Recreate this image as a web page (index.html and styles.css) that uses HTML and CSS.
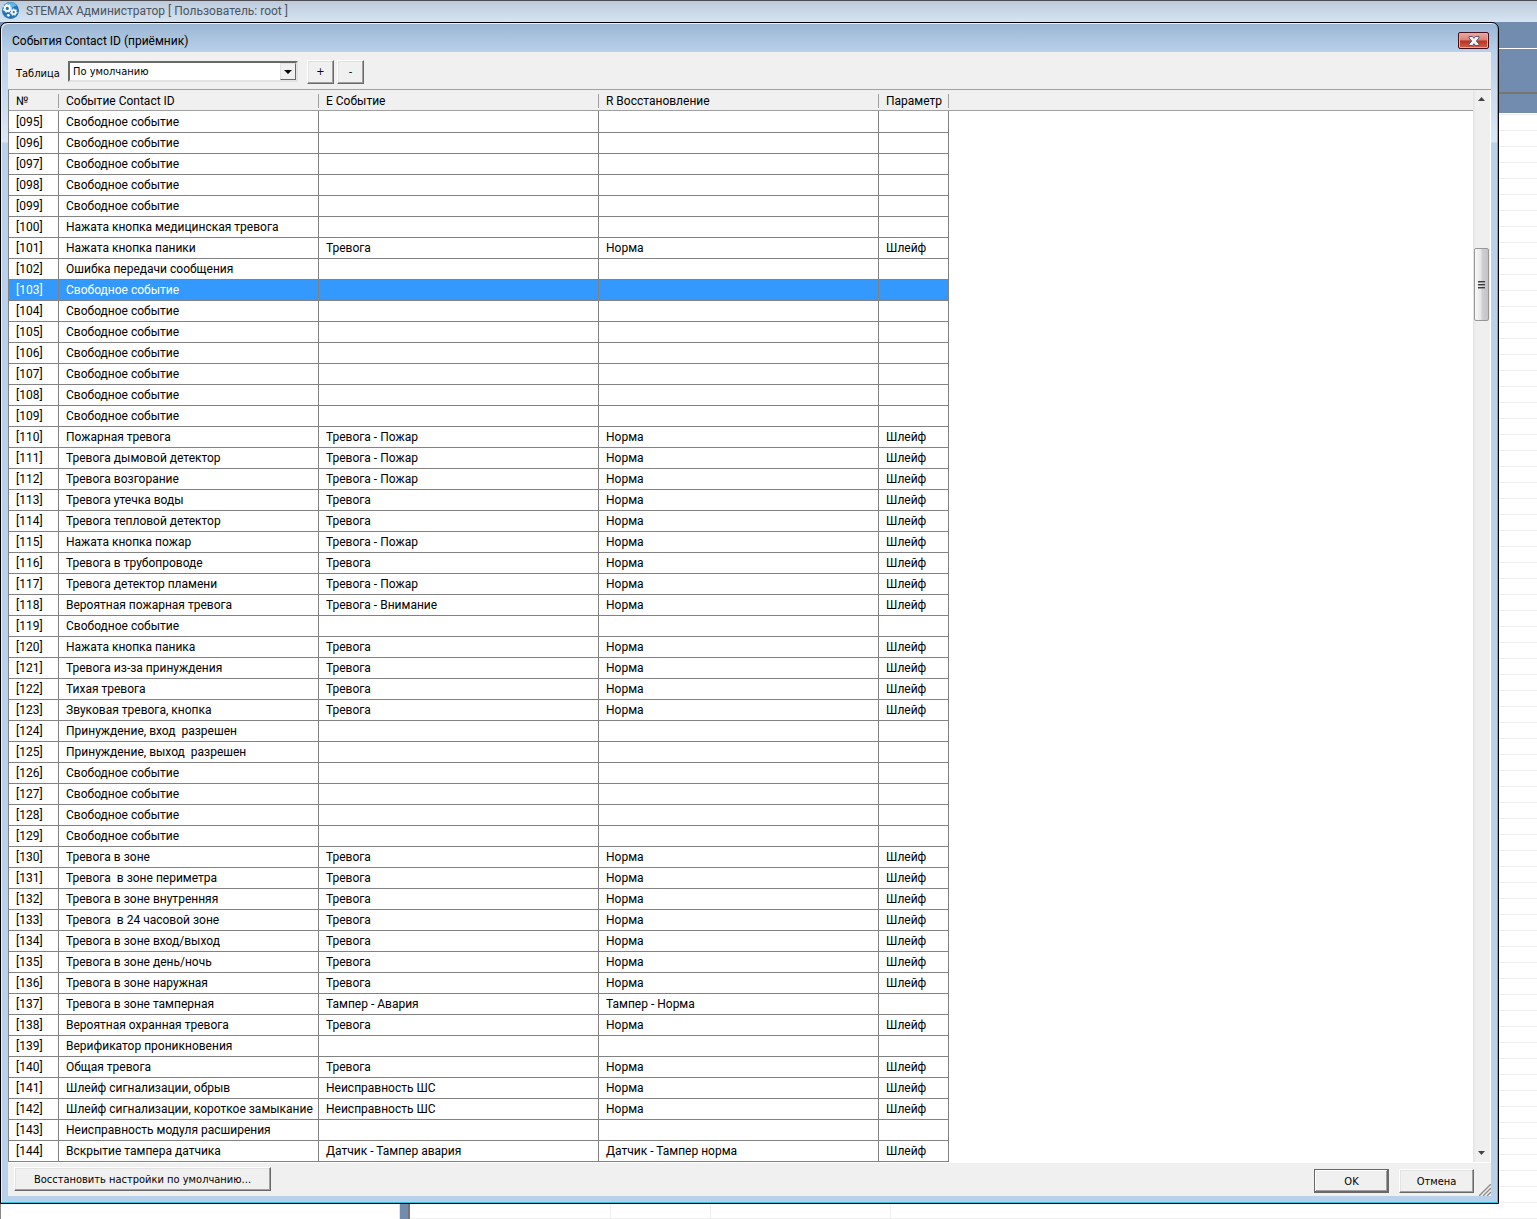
FILE: index.html
```
<!DOCTYPE html>
<html lang="ru">
<head>
  <meta charset="UTF-8">
  <title>STEMAX Администратор</title>
  <link rel="stylesheet" href="styles.css">
</head>
<body>

<div class="desktop">
  <div class="app">
    <header class="app-title">
      <svg class="app-icon" width="17" height="17" viewBox="0 0 16 16">
        <circle cx="8" cy="8" r="8" fill="#2474b8"/>
        <path d="M2 3a8 8 0 0 1 12 0L8 6z" fill="#64b4e2"/>
        <circle cx="5" cy="6" r="2.4" fill="#2474b8" stroke="#fff" stroke-width="1.8"/>
        <circle cx="5" cy="6" r="3.6" fill="none" stroke="#fff" stroke-width="1" stroke-dasharray="1.5 1.5"/>
        <circle cx="11" cy="9.500" r="1.900" fill="#2474b8" stroke="#fff" stroke-width="1.600"/>
        <circle cx="11" cy="9.500" r="3" fill="none" stroke="#fff" stroke-width="1" stroke-dasharray="1.3 1.3"/>
        <circle cx="6" cy="12.500" r="1.300" fill="#fff"/>
      </svg>
      <span>STEMAX Администратор [ Пользователь: root ]</span>
    </header>
    <div class="app-menu"></div>
    <div class="app-tools"></div>
    <div class="app-head"></div>
    <div class="app-panes">
      <div class="pane-tree"></div>
      <div class="splitter"></div>
      <div class="pane-list">
        <div class="list-col col-a"></div>
        <div class="list-col col-b"></div>
        <div class="list-col col-c"></div>
      </div>
    </div>
  </div>

  <div class="dialog">
    <div class="dialog-title">
      <span>События Contact ID (приёмник)</span>
      <button class="btn-close" aria-label="Закрыть">
        <svg width="12" height="10" viewBox="0 0 12 10">
          <path d="M1 .5h3.500L6 2.300 7.500.5H11v1.500L8.300 5 11 8v1.500H7.500L6 7.700 4.500 9.500H1V8l2.700-3L1 2z" fill="#f4f4f6" stroke="#535b74"/>
        </svg>
      </button>
    </div>

    <div class="dialog-body">
      <div class="toolbar">
        <label for="tableSelect">Таблица</label>
        <div class="combo">
          <select id="tableSelect">
            <option>По умолчанию</option>
          </select>
          <span class="combo-arrow"></span>
        </div>
        <button class="btn btn-small" aria-label="Добавить">+</button>
        <button class="btn btn-small" aria-label="Удалить">-</button>
      </div>

      <div class="list">
        <table class="events">
          <thead>
            <tr>
              <th class="c-num">№</th>
              <th class="c-name">Событие Contact ID</th>
              <th class="c-event">E Событие</th>
              <th class="c-event">R Восстановление</th>
              <th class="c-param">Параметр</th>
              <th class="c-rest"></th>
            </tr>
          </thead>
          <tbody id="eventRows"></tbody>
        </table>
        <div class="scrollbar">
          <button class="scroll-btn" aria-label="Вверх">
            <svg width="7" height="4" viewBox="0 0 7 4"><path d="M3.500 0L7 4H0z" fill="#444"/></svg>
          </button>
          <div class="track-before"></div>
          <div class="thumb"><i></i><i></i><i></i></div>
          <div class="track-after"></div>
          <button class="scroll-btn" aria-label="Вниз">
            <svg width="7" height="4" viewBox="0 0 7 4"><path d="M0 0h7L3.500 4z" fill="#444"/></svg>
          </button>
        </div>
      </div>

      <div class="footer">
        <button class="btn btn-restore">Восстановить настройки по умолчанию...</button>
        <div class="footer-right">
          <button class="btn btn-ok">OK</button>
          <button class="btn btn-cancel">Отмена</button>
        </div>
        <svg class="grip" width="12" height="12" viewBox="0 0 12 12">
          <path d="M0 12L12 0M4 12l8-8M8 12l4-4" stroke="#8c8c8c" stroke-width="1.400" fill="none"/>
        </svg>
      </div>
    </div>
  </div>
</div>

<script src="script.js"></script>
</body>
</html>
```

FILE: styles.css
```
* {
  box-sizing: border-box;
}
body {
  margin: 0;
  font-family: Roboto, "Open Sans", sans-serif;
  font-size: 12px;
  color: #000;
}
button, select {
  font-family: "DejaVu Sans Condensed", "DejaVu Sans", sans-serif;
  font-size: 11px;
  color: #000;
}

/* Main window, the dialog is stacked over it */
.desktop {
  display: grid;
  min-height: 100vh;
}
.app, .dialog {
  grid-area: 1 / 1;
  min-width: 0;
}
.app {
  display: flex;
  flex-direction: column;
  background: #fff;
}
.app-title {
  display: flex;
  align-items: center;
  gap: 7px;
  height: 22px;
  padding: 0 0 2px 2px;
  border-top: 1px solid #4c4c50;
  background: linear-gradient(#bccbdc, #d7e4f2);
  color: #4b5560;
  line-height: 18px;
}
.app-menu {
  height: 27px;
  background: #728cb0;
  border-bottom: 1px solid #fff;
}
.app-tools {
  height: 45px;
  background: #728cb0;
  border-bottom: 2px solid #77756d;
}
.app-head {
  height: 19px;
  background: #728cb0;
}
.app-panes {
  display: flex;
  flex: 1;
}
.pane-tree {
  width: 400px;
  border-left: 1px solid #888;
  border-right: 1px solid #e4e4e4;
}
.splitter {
  width: 10px;
  background: #728cb0;
  border-right: 2px solid #77756d;
}
.pane-list {
  display: flex;
  flex: 1;
  background: repeating-linear-gradient(#fff 0 1px, #efefef 1px 2px, #fff 2px 16px);
}
.list-col {
  border-right: 1px solid #efefef;
}
.col-a {
  width: 201px;
}
.col-b {
  width: 100px;
}
.col-c {
  width: 180px;
}

/* Dialog window */
.dialog {
  display: flex;
  flex-direction: column;
  margin: 22px 38px 15px 0;
  padding: 0 7px 7px;
  border: 1px solid #000;
  border-radius: 7px 7px 0 0;
  background: linear-gradient(#9ab5d3, #b9d1ea 29px, #dbe7f5 119px, #b9d1ea 120px);
  box-shadow: inset -1px -1px #2cc6e4, inset 1px 1px #e4f0fa;
}
.dialog-title {
  display: flex;
  justify-content: space-between;
  align-items: center;
  height: 29px;
  padding: 6px 2px 0 4px;
}
.btn-close {
  display: flex;
  justify-content: center;
  align-items: center;
  width: 31px;
  height: 17px;
  padding: 0;
  border: 1px solid #43121c;
  border-radius: 2px;
  background: linear-gradient(#eba99f, #d98075 48%, #b8321d 52%, #d4604a);
  box-shadow: inset 0 0 0 1px #e9a99f;
}
.dialog-body {
  display: flex;
  flex-direction: column;
  flex: 1;
  background: #f0f0f0;
}

.toolbar {
  display: flex;
  align-items: center;
  height: 38px;
  padding: 2px 0 0 8px;
  border-bottom: 1px solid #a0a0a0;
}
.toolbar label {
  width: 52px;
  padding-top: 4px;
  font-family: "DejaVu Sans Condensed", "DejaVu Sans", sans-serif;
  font-size: 11px;
}
.combo {
  position: relative;
  width: 230px;
  margin-right: 9px;
}
.combo select {
  display: block;
  width: 100%;
  height: 21px;
  padding: 0 18px 0 3px;
  border: 2px solid;
  border-color: #696969 #e3e3e3 #e3e3e3 #696969;
  border-radius: 0;
  background: #fff;
  appearance: none;
}
.combo-arrow {
  position: absolute;
  top: 2px;
  right: 2px;
  width: 16px;
  height: 17px;
  border: 1px solid;
  border-color: #e3e3e3 #696969 #696969 #e3e3e3;
  background: #f0f0f0;
  pointer-events: none;
}
.combo-arrow::after {
  content: "";
  position: absolute;
  top: 6px;
  left: 3px;
  border: 4px solid transparent;
  border-top-color: #000;
  border-bottom: 0;
}

.btn {
  height: 24px;
  padding: 0;
  border: 1px solid;
  border-color: #fff #696969 #696969 #fff;
  border-radius: 0;
  background: #f0f0f0;
  box-shadow: inset -1px -1px #a0a0a0, inset 1px 1px #e3e3e3;
}
.btn-small {
  width: 27px;
  margin-right: 3px;
}

/* Event list */
.list {
  display: flex;
  border-left: 1px solid #828282;
  background: #fff;
}
.events {
  flex: 1;
  width: 100%;
  table-layout: fixed;
  border-spacing: 0;
  font-size: 12px;
}
.events th, .events td {
  height: 21px;
  padding: 0 0 0 7px;
  line-height: 20px;
  text-align: left;
  font-weight: normal;
  white-space: pre;
  overflow: hidden;
}
.events th {
  padding-top: 2px;
  border-bottom: 1px solid #a0a0a0;
  background: linear-gradient(#a0a0a0, #a0a0a0) right 4px / 1px 14px no-repeat #f0f0f0;
  line-height: 18px;
}
.events td {
  border-right: 1px solid #828282;
  border-bottom: 1px solid #828282;
}
.events tbody tr:first-child td {
  height: 22px;
}
.events th:last-child {
  background: #f0f0f0;
}
.events td:last-child {
  border: 0;
}
.events .selected td:not(:last-child) {
  background: #3399ff;
  color: #fff;
}
.events .c-num {
  width: 50px;
}
.events .c-name {
  width: 260px;
}
.events .c-event {
  width: 280px;
}
.events .c-param {
  width: 70px;
}

.scrollbar {
  display: flex;
  flex-direction: column;
  flex: none;
  width: 18px;
  padding: 0 1px;
  border-right: 1px solid #fff;
  background: linear-gradient(to right, #e3e3e3, #efefef 3px);
}
.scroll-btn {
  display: flex;
  justify-content: center;
  align-items: center;
  height: 18px;
  padding: 0;
  border: 0;
  background: none;
}
.track-before {
  flex: 14;
}
.track-after {
  flex: 82;
}
.thumb {
  display: flex;
  flex-direction: column;
  justify-content: center;
  align-items: center;
  gap: 1px;
  height: 73px;
  border: 1px solid #979797;
  border-radius: 2px;
  background: linear-gradient(to right, #f8f8f8, #e6e6e8 45%, #cfcfd2 55%, #c4c4c8);
}
.thumb i {
  width: 7px;
  height: 2px;
  border-top: 1px solid #3c3c3c;
  background: #999;
}

.footer {
  display: flex;
  align-items: flex-start;
  flex: 1;
  padding: 4px 0 0 6px;
  border-top: 1px solid #fff;
}
.btn-restore {
  width: 257px;
}
.footer-right {
  display: flex;
  gap: 10px;
  margin: 2px 5px 0 auto;
}
.btn-ok, .btn-cancel {
  width: 75px;
}
.btn-ok {
  border-color: #696969;
  box-shadow: inset -1px -1px #696969, inset 1px 1px #fff, inset -2px -2px #a0a0a0;
}
.grip {
  align-self: flex-end;
}
```

FILE: script.js
```
// Общие наборы значений: [событие, восстановление, параметр]
const alarm = ['Тревога', 'Норма', 'Шлейф'];
const fire = ['Тревога - Пожар', 'Норма', 'Шлейф'];
const fault = ['Неисправность ШС', 'Норма', 'Шлейф'];
const free = 'Свободное событие';

// Строки идут подряд, начиная с этого кода
const firstCode = 95;
const selectedCode = 103;

const events = [
  [free],
  [free],
  [free],
  [free],
  [free],
  ['Нажата кнопка медицинская тревога'],
  ['Нажата кнопка паники', ...alarm],
  ['Ошибка передачи сообщения'],
  [free],
  [free],
  [free],
  [free],
  [free],
  [free],
  [free],
  ['Пожарная тревога', ...fire],
  ['Тревога дымовой детектор', ...fire],
  ['Тревога возгорание', ...fire],
  ['Тревога утечка воды', ...alarm],
  ['Тревога тепловой детектор', ...alarm],
  ['Нажата кнопка пожар', ...fire],
  ['Тревога в трубопроводе', ...alarm],
  ['Тревога детектор пламени', ...fire],
  ['Вероятная пожарная тревога', 'Тревога - Внимание', 'Норма', 'Шлейф'],
  [free],
  ['Нажата кнопка паника', ...alarm],
  ['Тревога из-за принуждения', ...alarm],
  ['Тихая тревога', ...alarm],
  ['Звуковая тревога, кнопка', ...alarm],
  ['Принуждение, вход  разрешен'],
  ['Принуждение, выход  разрешен'],
  [free],
  [free],
  [free],
  [free],
  ['Тревога в зоне', ...alarm],
  ['Тревога  в зоне периметра', ...alarm],
  ['Тревога в зоне внутренняя', ...alarm],
  ['Тревога  в 24 часовой зоне', ...alarm],
  ['Тревога в зоне вход/выход', ...alarm],
  ['Тревога в зоне день/ночь', ...alarm],
  ['Тревога в зоне наружная', ...alarm],
  ['Тревога в зоне тамперная', 'Тампер - Авария', 'Тампер - Норма'],
  ['Вероятная охранная тревога', ...alarm],
  ['Верификатор проникновения'],
  ['Общая тревога', ...alarm],
  ['Шлейф сигнализации, обрыв', ...fault],
  ['Шлейф сигнализации, короткое замыкание', ...fault],
  ['Неисправность модуля расширения'],
  ['Вскрытие тампера датчика', 'Датчик - Тампер авария', 'Датчик - Тампер норма', 'Шлейф']
];

const body = document.getElementById('eventRows');

events.forEach((event, i) => {
  const code = firstCode + i;
  const row = body.insertRow();
  if (code === selectedCode) row.className = 'selected';

  row.insertCell().textContent = '[' + String(code).padStart(3, '0') + ']';
  for (let n = 0; n < 4; n++) {
    row.insertCell().textContent = event[n] || '';
  }
  row.insertCell();
});
```
